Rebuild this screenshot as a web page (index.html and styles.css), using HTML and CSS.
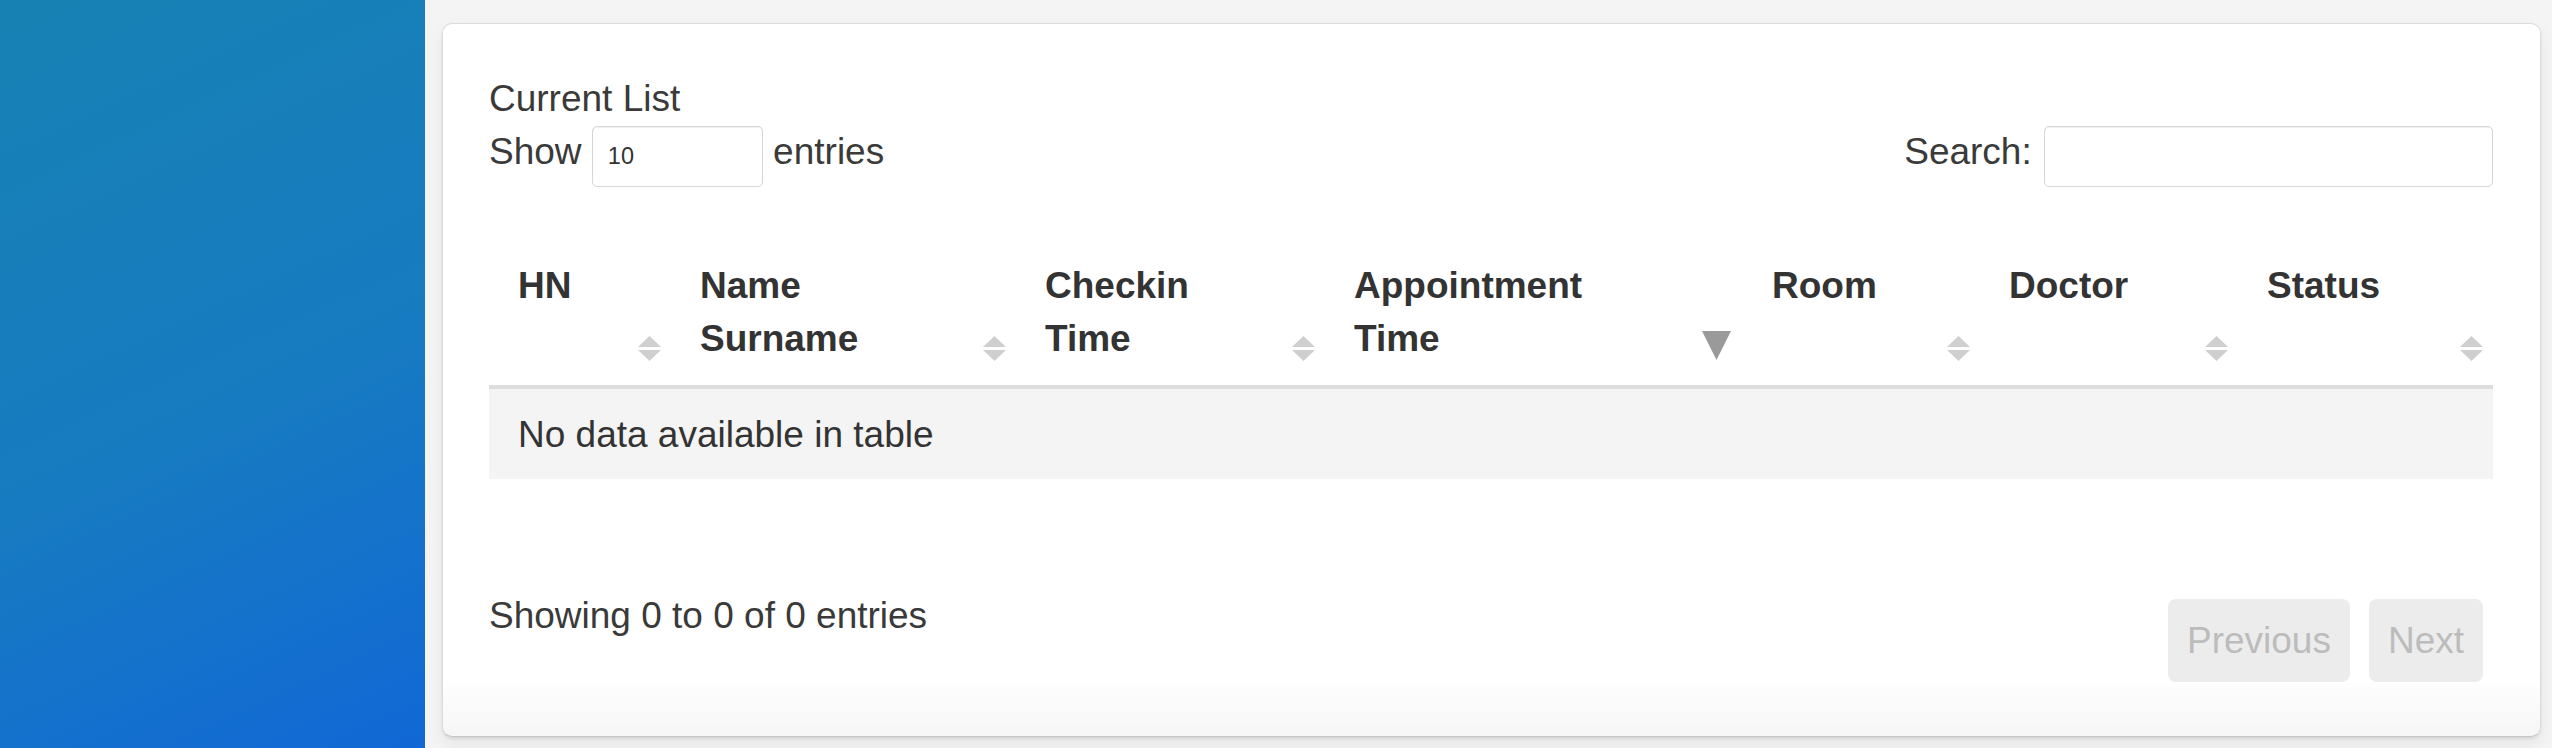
FILE: index.html
```html
<!DOCTYPE html>
<html lang="en">
<head>
<meta charset="utf-8">
<title>Current List</title>
<link rel="stylesheet" href="styles.css">
</head>
<body>
<div class="layout">
  <aside class="sidebar"></aside>
  <main class="main">
    <section class="card">
      <div class="card-title">Current List</div>
      <div class="dt-top">
        <label class="dt-length">Show <input class="dt-input dt-input-len" type="text" value="10"> entries</label>
        <label class="dt-filter">Search: <input class="dt-input dt-input-search" type="text"></label>
      </div>
      <table class="dt">
        <colgroup>
          <col class="c-hn">
          <col class="c-name">
          <col class="c-checkin">
          <col class="c-appt">
          <col class="c-room">
          <col class="c-doctor">
          <col class="c-status">
        </colgroup>
        <thead>
          <tr>
            <th>HN<span class="sort-both"><svg viewBox="0 0 23 25" width="23" height="25"><polygon points="0,11 11.5,0 23,11"/><polygon points="0,14 23,14 11.5,25"/></svg></span></th>
            <th>Name Surname<span class="sort-both"><svg viewBox="0 0 23 25" width="23" height="25"><polygon points="0,11 11.5,0 23,11"/><polygon points="0,14 23,14 11.5,25"/></svg></span></th>
            <th>Checkin Time<span class="sort-both"><svg viewBox="0 0 23 25" width="23" height="25"><polygon points="0,11 11.5,0 23,11"/><polygon points="0,14 23,14 11.5,25"/></svg></span></th>
            <th>Appointment Time<span class="sort-desc"><svg viewBox="0 0 29 29" width="29" height="29"><polygon points="0,0 29,0 14.5,29"/></svg></span></th>
            <th>Room<span class="sort-both"><svg viewBox="0 0 23 25" width="23" height="25"><polygon points="0,11 11.5,0 23,11"/><polygon points="0,14 23,14 11.5,25"/></svg></span></th>
            <th>Doctor<span class="sort-both"><svg viewBox="0 0 23 25" width="23" height="25"><polygon points="0,11 11.5,0 23,11"/><polygon points="0,14 23,14 11.5,25"/></svg></span></th>
            <th>Status<span class="sort-both"><svg viewBox="0 0 23 25" width="23" height="25"><polygon points="0,11 11.5,0 23,11"/><polygon points="0,14 23,14 11.5,25"/></svg></span></th>
          </tr>
        </thead>
        <tbody>
          <tr>
            <td class="dt-empty" colspan="7">No data available in table</td>
          </tr>
        </tbody>
      </table>
      <div class="dt-bottom">
        <div class="dt-info">Showing 0 to 0 of 0 entries</div>
        <div class="dt-paginate">
          <button class="page-btn" type="button">Previous</button>
          <button class="page-btn" type="button">Next</button>
        </div>
      </div>
    </section>
  </main>
</div>
</body>
</html>
```
FILE: styles.css
```css
html, body {
  margin: 0;
  padding: 0;
}

body {
  background: #f4f4f4;
  font-family: "Liberation Sans", Arial, Helvetica, sans-serif;
  font-size: 37px;
  line-height: 1.42857;
  color: #333;
  width: 2552px;
  height: 748px;
  overflow: hidden;
}

.layout {
  display: flex;
  height: 748px;
}

.sidebar {
  flex: 0 0 425px;
  background: linear-gradient(155deg, #1781b3 0%, #177bc1 55%, #1168d6 100%);
}

.main {
  flex: 1 1 auto;
  padding: 23px 11px 0 17px;
  min-width: 0;
}

.card {
  box-sizing: border-box;
  height: 714px;
  border: 1px solid #dcdcdc;
  border-bottom-color: #c4c4c4;
  border-radius: 10px;
  background: linear-gradient(to bottom, #ffffff calc(100% - 60px), #f6f6f6 100%);
  box-shadow: 0 2px 3px rgba(0, 0, 0, 0.08), 0 8px 18px rgba(0, 0, 0, 0.06);
  padding: 49px 47px 53px 46px;
}

.card-title {
  color: #3a3a3a;
}

.dt-top {
  display: flex;
  justify-content: space-between;
  color: #3a3a3a;
}

.dt-input {
  box-sizing: border-box;
  height: 61px;
  border: 1px solid #d6d6d6;
  border-radius: 5px;
  box-shadow: inset 0 1px 1px rgba(0, 0, 0, 0.06);
  padding: 0 15px;
  font-family: "Liberation Sans", Arial, Helvetica, sans-serif;
  font-size: 23.5px;
  color: #333;
  background: #fff;
  vertical-align: baseline;
  outline: none;
}

.dt-input-len {
  width: 171px;
}

.dt-input-search {
  width: 449px;
  margin-left: 2px;
}

.dt {
  width: 100%;
  table-layout: fixed;
  border-collapse: collapse;
  margin-top: 52px;
}

.c-hn { width: 182px; }
.c-name { width: 345px; }
.c-checkin { width: 309px; }
.c-appt { width: 418px; }
.c-room { width: 237px; }
.c-doctor { width: 258px; }
.c-status { width: 255px; }

.dt th {
  position: relative;
  text-align: left;
  vertical-align: top;
  font-weight: bold;
  color: #333;
  padding: 21px 70px 19px 29px;
  border-bottom: 4px solid #dddddd;
}

.sort-both {
  position: absolute;
  right: 10px;
  bottom: 24px;
  width: 23px;
  height: 25px;
  display: block;
}

.sort-both svg {
  display: block;
  fill: #cfcfcf;
}

.sort-desc {
  position: absolute;
  right: 12px;
  bottom: 25px;
  width: 29px;
  height: 29px;
  display: block;
}

.sort-desc svg {
  display: block;
  fill: #9a9a9a;
}

.dt td {
  padding: 20px 29px 18px;
  background: #f4f4f4;
  color: #333;
}

.dt-bottom {
  display: flex;
  justify-content: space-between;
  align-items: flex-start;
  margin-top: 111px;
}

.dt-info {
  color: #3a3a3a;
}

.dt-paginate {
  display: flex;
  gap: 19px;
  margin-top: 9px;
  padding-right: 10px;
}

.page-btn {
  font-family: "Liberation Sans", Arial, Helvetica, sans-serif;
  font-size: 37px;
  line-height: 1.42857;
  color: #bcbcbc;
  background: #ececec;
  border: 0;
  border-radius: 8px;
  padding: 16px 19px 14px;
  margin: 0;
  cursor: default;
}
```
